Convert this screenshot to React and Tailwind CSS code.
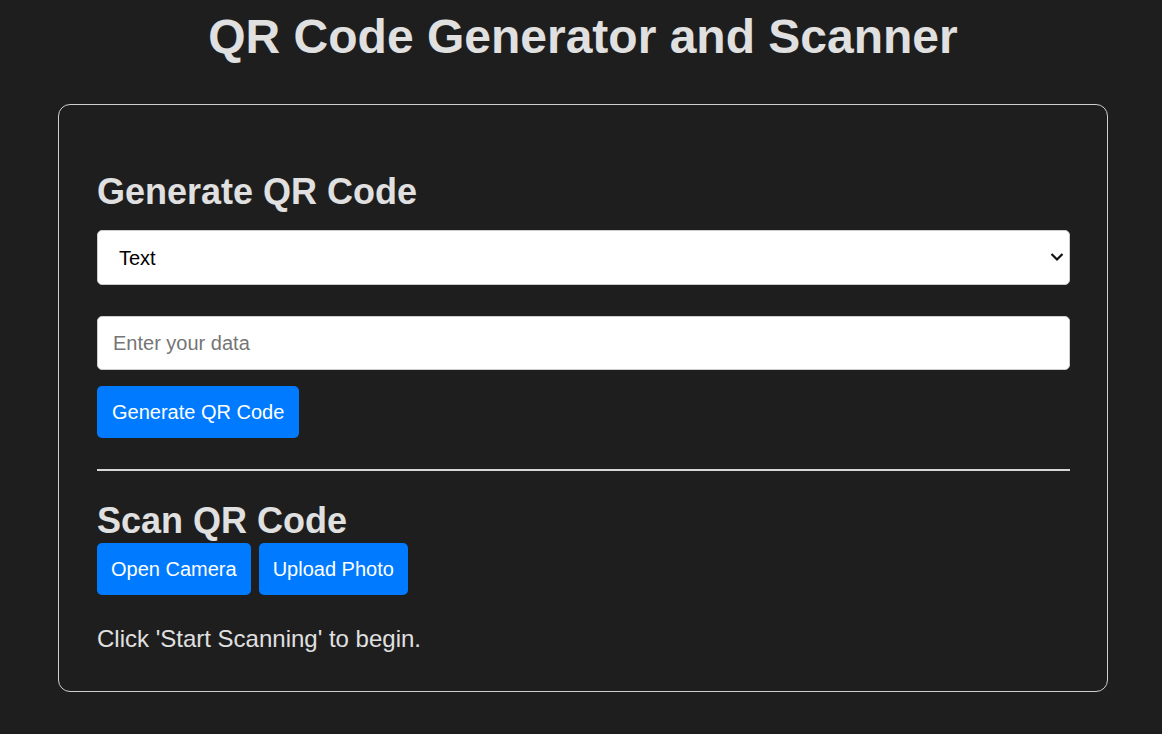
import { useState } from 'react'

const font = { fontFamily: '"Liberation Sans", Arial, sans-serif' }

export default function App() {
  const [type, setType] = useState('text')
  const [data, setData] = useState('')

  return (
    <div className="min-h-[734px] bg-[#1e1e1e] text-[#e0e0e0] pt-[10px] pb-10" style={font}>
      <h1 className="text-center text-[48px] leading-[54px] font-bold pl-[4px]">QR Code Generator and Scanner</h1>

      <div className="mt-[40px] ml-[58px] w-[1050px] border border-[#cfcfcf] rounded-xl pl-[38px] pr-[37px] pt-[67px] pb-[38px]">
        {/* Generate */}
        <h2 className="text-[36px] leading-[40px] font-bold">Generate QR Code</h2>
        <div className="relative mt-[18px]">
          <select
            value={type}
            onChange={e => setType(e.target.value)}
            className="appearance-none w-full h-[55px] pl-[21px] pr-10 bg-white text-black text-[20px] border border-[#cccccc] rounded-[5px] outline-none"
          >
            <option value="text">Text</option>
            <option value="url">URL</option>
            <option value="email">Email</option>
            <option value="phone">Phone</option>
          </select>
          <svg className="absolute right-[6px] top-[22px] pointer-events-none" width="14" height="10" viewBox="0 0 14 10" fill="none">
            <path d="M1.5 2 L7 7.5 L12.5 2" stroke="#111" strokeWidth="2.2" />
          </svg>
        </div>

        <input
          value={data}
          onChange={e => setData(e.target.value)}
          placeholder="Enter your data"
          className="block w-full h-[54px] mt-[31px] px-[15px] bg-white text-black text-[20px] border border-[#cccccc] rounded-[5px] outline-none placeholder:text-[#757575]"
        />

        <button className="mt-[16px] h-[52px] px-[15px] bg-[#007bff] text-white text-[20px] rounded-[5px]">
          Generate QR Code
        </button>

        <div className="mt-[31px] h-[2px] bg-[#d6d6d6]" />

        {/* Scan */}
        <h2 className="mt-[30px] text-[36px] leading-[40px] font-bold">Scan QR Code</h2>
        <div className="flex gap-[8px] mt-[2px]">
          <button className="h-[52px] px-[14px] bg-[#007bff] text-white text-[20px] rounded-[5px]">Open Camera</button>
          <button className="h-[52px] px-[14px] bg-[#007bff] text-white text-[20px] rounded-[5px]">Upload Photo</button>
        </div>

        <p className="mt-[30px] text-[24px] leading-[28px]">Click 'Start Scanning' to begin.</p>
      </div>
    </div>
  )
}
